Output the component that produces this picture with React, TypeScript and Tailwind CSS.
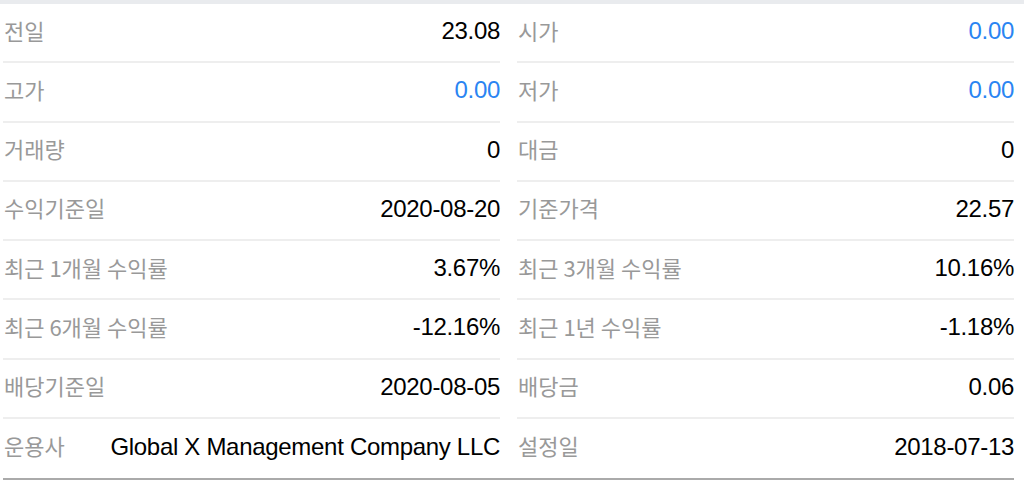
const rows: [string, string, boolean, string, string, boolean][] = [
  ['전일', '23.08', false, '시가', '0.00', true],
  ['고가', '0.00', true, '저가', '0.00', true],
  ['거래량', '0', false, '대금', '0', false],
  ['수익기준일', '2020-08-20', false, '기준가격', '22.57', false],
  ['최근 1개월 수익률', '3.67%', false, '최근 3개월 수익률', '10.16%', false],
  ['최근 6개월 수익률', '-12.16%', false, '최근 1년 수익률', '-1.18%', false],
  ['배당기준일', '2020-08-05', false, '배당금', '0.06', false],
  ['운용사', 'Global X Management Company LLC', false, '설정일', '2018-07-13', false],
];

function Cell({ label, value, blue, last }: { label: string; value: string; blue: boolean; last: boolean }) {
  return (
    <div
      className={
        'flex h-[59.25px] items-center justify-between pb-[3px] pl-[1px] ' +
        (last ? '' : 'border-b-2 border-[#eeeeee]')
      }
    >
      <span className="mb-[3px] whitespace-nowrap text-[22px] leading-[30px] text-[#999999] [font-family:'Noto_Sans_CJK_KR',sans-serif]">
        {label}
      </span>
      <span
        className={
          "whitespace-nowrap text-[24px] leading-[30px] tracking-[-0.3px] [font-family:'Liberation_Sans',Arial,sans-serif] " +
          (blue ? 'text-[#2a84f2]' : 'text-black')
        }
      >
        {value}
      </span>
    </div>
  );
}

export default function App() {
  return (
    <div className="h-[489px] w-[1024px] bg-white">
      <div className="h-1 bg-[#e9ebee]" />
      <div className="ml-[3px] mr-[10px] border-b-2 border-[#aaaaaa]">
        {rows.map((r, i) => {
          const last = i === rows.length - 1;
          return (
            <div key={r[0]} className="grid grid-cols-2 gap-x-[17px]">
              <Cell label={r[0]} value={r[1]} blue={r[2]} last={last} />
              <Cell label={r[3]} value={r[4]} blue={r[5]} last={last} />
            </div>
          );
        })}
      </div>
    </div>
  );
}
